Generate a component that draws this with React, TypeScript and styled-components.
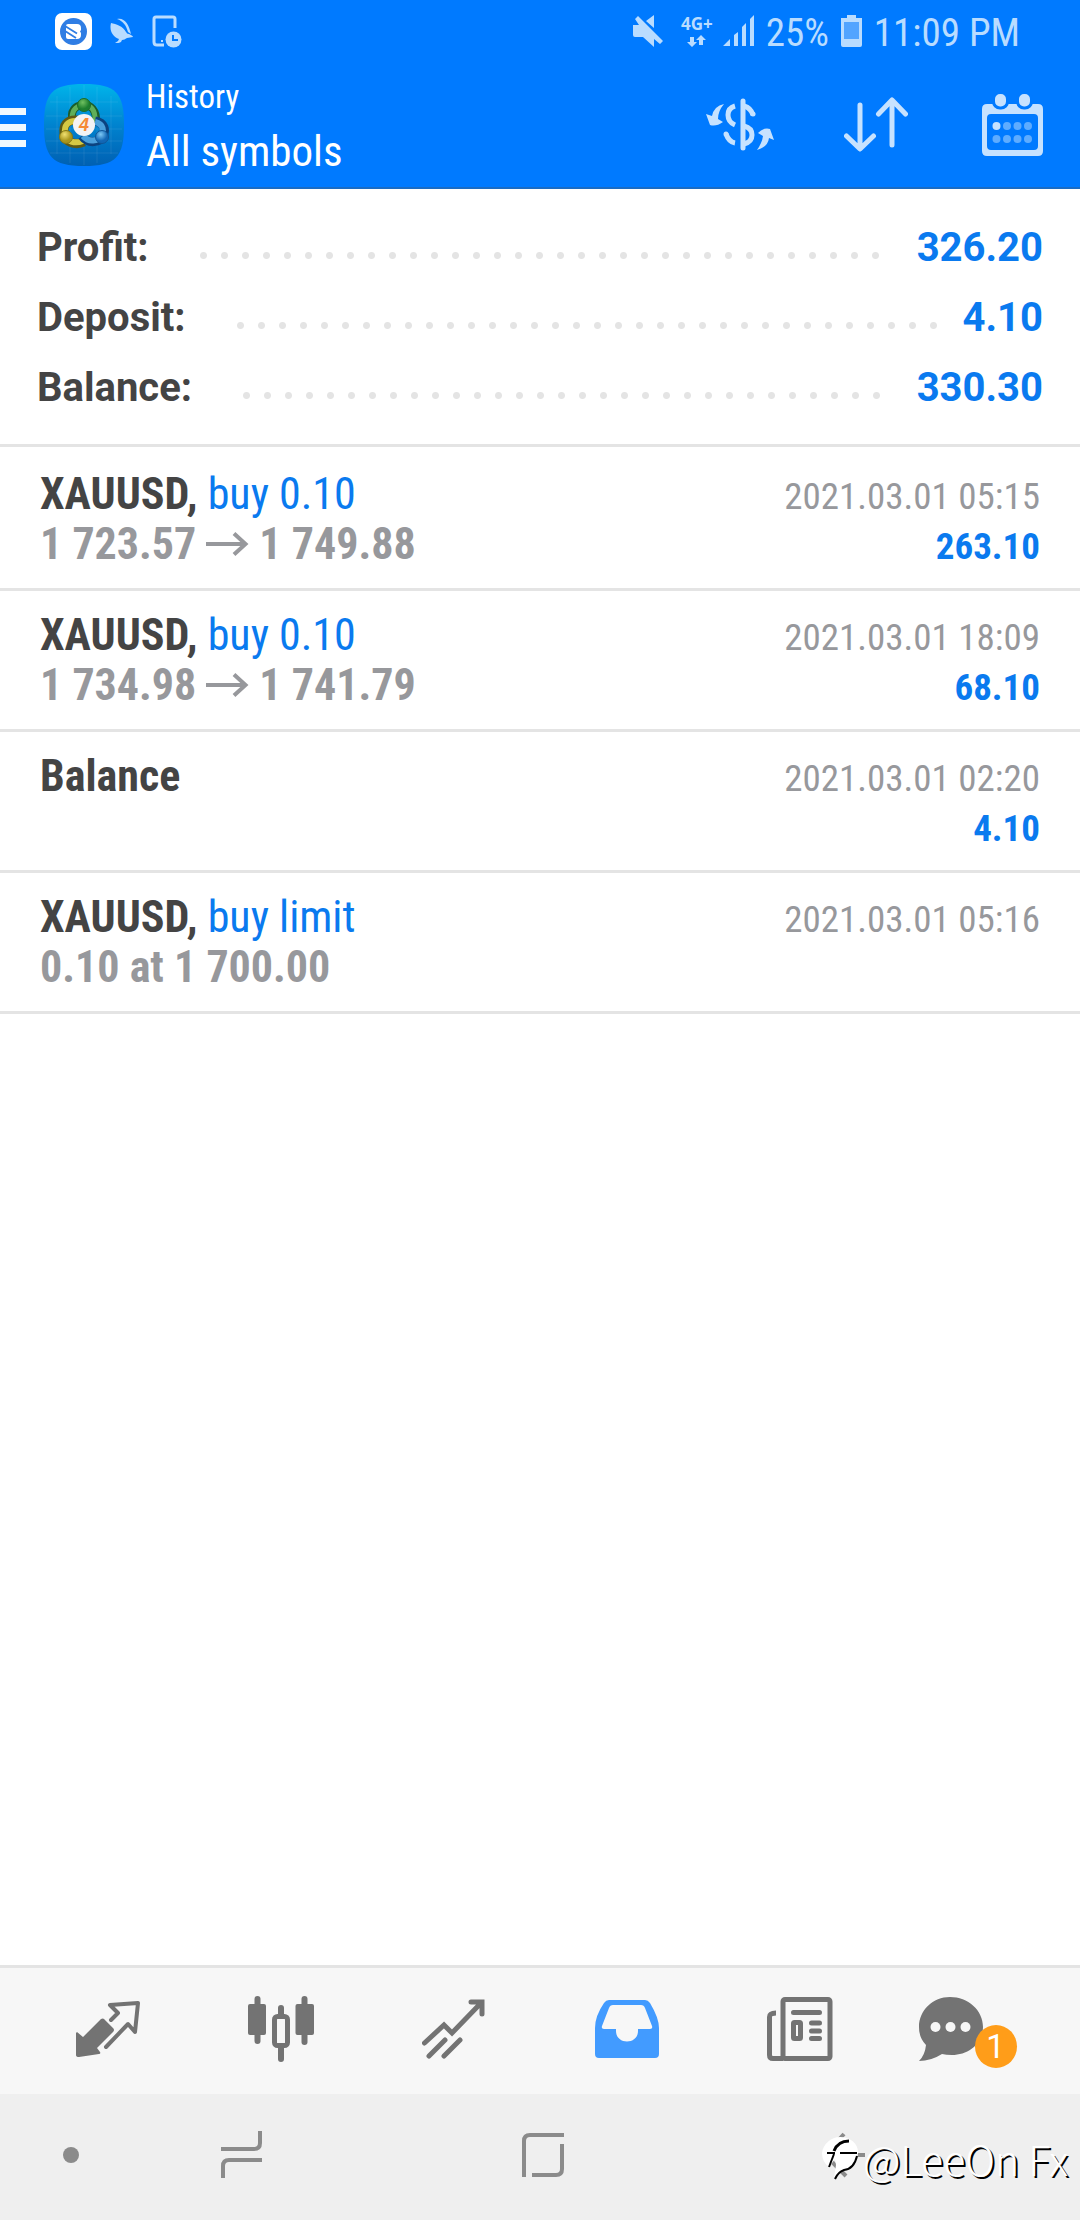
import React from "react";
import styled, { createGlobalStyle } from "styled-components";

const condensed = '"Roboto Condensed", "Liberation Sans Narrow", Roboto, sans-serif';
const blue = "#0a7aef";
const line = "#e4e4e4";

const GlobalStyle = createGlobalStyle`
  *, *::before, *::after { box-sizing: border-box; }
  body { margin: 0; background: #fff; }
  button { margin: 0; padding: 0; border: 0; background: none; color: inherit; font: inherit; cursor: pointer; }
  svg { display: block; flex: none; }
  ul, dl, dd, p, h1 { margin: 0; padding: 0; }
  ul { list-style: none; }
`;

const Screen = styled.div`
  display: flex;
  flex-direction: column;
  min-height: 100vh;
  font-family: ${condensed};
  color: #444;
`;

const Header = styled.header`
  background: #007aff;
  border-bottom: 2px solid #1a6cc4;
`;

const StatusBar = styled.div`
  display: flex;
  align-items: center;
  justify-content: space-between;
  height: 62px;
  padding: 0 60px 0 55px;
  color: #b9dcff;
`;

const StatusGroup = styled.div<{ $gap: number }>`
  display: flex;
  align-items: center;
  gap: ${(p) => p.$gap}px;
`;

const StatusText = styled.span`
  padding-top: 3px;
  font-size: 39px;
  line-height: 46px;
`;

const Network = styled.div`
  display: flex;
  flex-direction: column;
  align-items: center;
  gap: 2px;
  margin-left: 8px;
  font: 700 17px/18px "Noto Sans", sans-serif;
`;

const Toolbar = styled.div`
  display: flex;
  align-items: center;
  height: 125px;
  color: #fff;
`;

const MenuButton = styled.button`
  display: flex;
  align-items: center;
  gap: 18px;
`;

const Titles = styled.div`
  flex: 1;
  margin-left: 22px;
  padding-top: 5px;
`;

const Section = styled.p`
  font-size: 33px;
  line-height: 48px;
`;

const Title = styled.h1`
  font-size: 43px;
  font-weight: 400;
  line-height: 60px;
`;

const ToolButton = styled.button`
  display: flex;
  align-items: center;
  justify-content: center;
  width: 136px;
  height: 125px;
  color: #c6e2ff;
`;

const Summary = styled.dl`
  padding: 24px 37px 21px 37px;
  border-bottom: 3px solid ${line};
  font: 700 40px/70px Roboto, sans-serif;
`;

const SummaryRow = styled.div`
  display: flex;
  align-items: center;
`;

const Leader = styled.span`
  flex: 1;
  height: 7px;
  margin: 14px 16px 0 44px;

  &::before {
    content: "";
    display: block;
    width: round(down, 100%, 21px);
    height: 7px;
    background: radial-gradient(circle at center, ${line} 3px, transparent 4px) left center / 21px 7px repeat-x;
  }
`;

const SummaryValue = styled.dd`
  color: ${blue};
`;

const Deals = styled.ul`
  flex: 1;
  padding-top: 3px;
`;

const Deal = styled.li`
  display: flex;
  justify-content: space-between;
  height: 141px;
  padding: 19px 40px 0 40px;
  border-bottom: 3px solid ${line};
  line-height: 50px;
`;

const Name = styled.p`
  font-size: 44px;
  font-weight: 700;
`;

const Side = styled.span`
  color: ${blue};
  font-weight: 400;
`;

const Prices = styled.p`
  display: flex;
  align-items: center;
  gap: 10px;
  color: #97989c;
  font-size: 44px;
  font-weight: 700;
`;

const Meta = styled.div`
  padding-top: 3px;
  text-align: right;
  font-size: 37px;
`;

const Time = styled.p`
  color: #97989c;
`;

const Result = styled.p`
  color: ${blue};
  font-weight: 700;
`;

const TabBar = styled.nav`
  display: flex;
  height: 129px;
  padding: 0 21px 5px;
  border-top: 3px solid ${line};
  background: #f7f7f7;
`;

const Tab = styled.button<{ $active?: boolean }>`
  display: flex;
  flex: 1;
  align-items: center;
  justify-content: center;
  color: ${(p) => (p.$active ? "#429bff" : "#737373")};
`;

const ChatIcon = styled.span`
  position: relative;
  width: 108px;
`;

const Badge = styled.span`
  position: absolute;
  left: 56px;
  top: 28px;
  width: 42px;
  height: 43px;
  border-radius: 50%;
  background: #ff9d19;
  color: #fff;
  font: 400 33px/44px Roboto, sans-serif;
  text-align: center;
`;

const SystemBar = styled.div`
  position: relative;
  display: flex;
  height: 126px;
  padding: 0 85px 5px 51px;
  background: #efefef;
  color: #8b8b8b;
`;

const SystemButton = styled.button<{ $small?: boolean }>`
  display: flex;
  flex: ${(p) => (p.$small ? "0 0 40px" : "1")};
  align-items: center;
  justify-content: center;
`;

const Watermark = styled.div`
  position: absolute;
  right: 12px;
  bottom: 32px;
  display: flex;
  align-items: center;
  gap: 4px;
  color: #fff;
  font: 300 41px/60px "Noto Sans CJK SC", sans-serif;
  text-shadow: 2px 2px 0 #000;
`;

const BrowserIcon = () => (
  <svg width="37" height="37" viewBox="0 0 37 37">
    <rect width="37" height="37" rx="7" fill="#fff" />
    <circle cx="18.500" cy="18.500" r="13.500" fill="#2f7de4" />
    <path d="M13 11h9q4 0 4 4v2l-1 1.500 1 1.500v2q0 4-4 4H13q-2 0-2-2V13q0-2 2-2z" fill="#fff" />
    <path d="M10 13l12 7.500M10 18l11 7" stroke="#2f7de4" strokeWidth="1.800" />
  </svg>
);

const BirdIcon = () => (
  <svg width="24" height="26" viewBox="0 0 24 26" fill="currentColor">
    <path d="M1 5c5 1 12 3 15 9 1 1 1 2 3 2 2 1 4 2 4 3l-6 1c-2 1-3 2-5 2l-1 2c-1 1-4 1-6 1l3-2 1-2C3 19-1 13 1 5z" />
    <path d="M7 1c7-2 12 5 14 15l-3-2C16 7 13 3 7 1z" />
  </svg>
);

const TabletIcon = () => (
  <svg width="31" height="33" viewBox="0 0 31 33" fill="none" stroke="currentColor">
    <path d="M23 13V4q0-2-2-2H4Q2 2 2 4v23q0 3 3 3h7" strokeWidth="3" />
    <rect x="9" y="25" width="2" height="2" fill="currentColor" stroke="none" />
    <circle cx="21.500" cy="24.500" r="8" fill="currentColor" stroke="none" />
    <path d="M21 20v5h5" stroke="#007aff" strokeWidth="2" />
  </svg>
);

const MuteIcon = () => (
  <svg width="30" height="32" viewBox="0 0 30 32" fill="currentColor">
    <path d="M21 0v13l-8-7zM0 10h6L2 4l3-3 25 25-3 3-6-5v8L10 22H2q-2 0-2-2z" />
  </svg>
);

const DataArrows = () => (
  <svg width="19" height="12" viewBox="0 0 19 12" fill="currentColor">
    <path d="M3 2h4v5h3l-5 5-5-5h3zM12 10h4V5h3l-5-5-5 5h3z" />
  </svg>
);

const SignalIcon = () => (
  <svg width="31" height="32" viewBox="0 0 31 32" fill="currentColor">
    <path d="M0 31l7-7v7zM11 20l4-3v14h-4zM19 12l4-4v23h-4zM27 4l4-4v31h-4z" />
  </svg>
);

const BatteryIcon = () => (
  <svg width="21" height="32" viewBox="0 0 21 32" fill="currentColor">
    <path d="M6 0h9v3h6v27q0 2-2 2H2q-2 0-2-2V3h6z" />
    <rect x="3" y="7" width="15" height="17" fill="#52a4ff" />
  </svg>
);

const MenuIcon = () => (
  <svg width="26" height="45" viewBox="0 0 26 45" fill="#f0f8ff">
    <path d="M0 6h26v7H0zM0 22h26v7H0zM0 38h26v7H0z" />
  </svg>
);

const AppLogo = () => (
  <svg width="80" height="82" viewBox="0 0 80 82">
    <defs>
      <linearGradient id="tile" x2="0" y2="1">
        <stop stopColor="#00b4ea" />
        <stop offset=".5" stopColor="#0083cf" />
        <stop offset="1" stopColor="#0060b2" />
      </linearGradient>
      <radialGradient id="green" cx=".4" cy=".3"><stop stopColor="#6fc060" /><stop offset="1" stopColor="#1d7f2e" /></radialGradient>
      <radialGradient id="gold" cx=".4" cy=".3"><stop stopColor="#f0e070" /><stop offset="1" stopColor="#a8951c" /></radialGradient>
      <radialGradient id="azure" cx=".4" cy=".3"><stop stopColor="#7cc8f5" /><stop offset="1" stopColor="#1267b5" /></radialGradient>
    </defs>
    <path d="M40 0C72 0 80 9 80 41S72 82 40 82 0 73 0 41 8 0 40 0z" fill="url(#tile)" />
    <path d="M13 12v58M26 3v76M40 1v80M53 3v76M67 12v58M6 18h68M2 32h76M2 45h76M2 57h76M6 69h68" stroke="#fff" strokeOpacity=".08" />
    <g fill="none">
      <path d="M28 34C27 24 34 21 40 21s13 4 12 18" stroke="#1b5c2a" strokeWidth="8" />
      <path d="M28 34C28 25 34 21 40 21s12 4 11 17" stroke="#5fae58" strokeWidth="5" />
      <path d="M34 36C22 35 19 42 20 50s11 12 20 8" stroke="#5f5a14" strokeWidth="9" />
      <path d="M34 37C23 36 20 42 21 50s10 10 18 7" stroke="#d5c944" strokeWidth="6" />
      <path d="M51 37c10 2 11 9 8 15s-14 9-21 0" stroke="#0c4380" strokeWidth="9" />
      <path d="M51 38c9 2 9 9 6 14s-12 7-18 0" stroke="#4ba0dc" strokeWidth="6" />
    </g>
    <circle cx="40" cy="21" r="6.500" fill="url(#green)" stroke="#1b6b2a" />
    <circle cx="22" cy="53" r="6.500" fill="url(#gold)" stroke="#827616" />
    <circle cx="58" cy="53" r="6.500" fill="url(#azure)" stroke="#0f5698" />
    <circle cx="40" cy="41" r="11" fill="#f4f3f4" />
    <text x="40" y="47" textAnchor="middle" fontFamily="Liberation Sans, sans-serif" fontSize="18" fontWeight="700" fontStyle="italic" fill="#f58a35">4</text>
  </svg>
);

const CurrencyIcon = () => (
  <svg width="68" height="54" viewBox="0 0 68 54" fill="none" stroke="currentColor">
    <path d="M37 3v47" strokeWidth="5" strokeLinecap="round" />
    <path d="M29 8q-7 2-7 9t7 10M38 8q7 2 9 9M38 28q8 2 8 9t-8 9M29 45q-6-1-9-9" strokeWidth="5" />
    <circle cx="47" cy="16" r="2.500" fill="currentColor" stroke="none" />
    <circle cx="20" cy="36" r="2.500" fill="currentColor" stroke="none" />
    <path d="M18 6Q8 8 6 18l-6-2 4 11q6 2 13-3l-5-3q0-8 6-15zM51 52q11-3 12-12l5 2-4-11q-6-2-12 4l5 3q-1 7-6 14z" fill="currentColor" stroke="none" />
  </svg>
);

const SortIcon = () => (
  <svg width="64" height="56" viewBox="0 0 64 56" fill="none" stroke="currentColor" strokeWidth="5" strokeLinecap="round" strokeLinejoin="round">
    <path d="M16 8v43M2.500 39L16 52l13.500-13M48 48V4M34.500 17L48 3l13.500 14" />
  </svg>
);

const CalendarIcon = () => (
  <svg width="61" height="64" viewBox="0 0 61 64">
    <path fillRule="evenodd" d="M5 11h51q5 0 5 5v42q0 5-5 5H5q-5 0-5-5V16q0-5 5-5zM9 21q-4 0-4 4v28q0 4 4 4h43q4 0 4-4V25q0-4-4-4z" fill="currentColor" />
    <g fill="currentColor" stroke="#007aff" strokeWidth="3">
      <rect x="11.500" y="-.500" width="14" height="15.500" rx="6.500" />
      <rect x="35.500" y="-.500" width="14" height="15.500" rx="6.500" />
    </g>
    <circle cx="14.500" cy="33" r="4" fill="#c6e2ff" />
    <g fill="#5eacff">
      {[25, 35.5, 46].map((x) => <circle key={x} cx={x} cy="33" r="4" />)}
      {[14.5, 25, 35.5, 46].map((x) => <circle key={x} cx={x} cy="46" r="4" />)}
    </g>
  </svg>
);

const ArrowGlyph = () => (
  <svg width="43" height="24" viewBox="0 0 43 24" fill="none" stroke="currentColor" strokeWidth="4" role="img" aria-label="to">
    <path d="M0 12h39M28 1.500L39.500 12 28 22.500" />
  </svg>
);

const QuotesIcon = () => (
  <svg width="64" height="58" viewBox="0 0 64 58">
    <path d="M1 32l6 5 18-18q2-1 3 0l9 9q2 2 0 4L21 48l3 4q1 2-1 2L3 57q-3 0-3-2V33z" fill="currentColor" />
    <path d="M35 20l7-7-8-8 28-2-3 29-7-8-22 23" fill="none" stroke="currentColor" strokeWidth="4" strokeLinejoin="round" strokeLinecap="round" />
  </svg>
);

const CandlesIcon = () => (
  <svg width="66" height="66" viewBox="0 0 66 66" fill="currentColor">
    <rect x="6.500" width="6" height="48" rx="3" />
    <rect x="53.500" width="6" height="49" rx="3" />
    <rect x="30" y="9" width="6" height="57" rx="3" />
    <rect y="8" width="18" height="31" rx="2" />
    <rect x="47.500" y="8" width="18.500" height="31" rx="2" />
    <rect x="26.500" y="20.500" width="13" height="29" rx="3" fill="#f7f7f7" stroke="currentColor" strokeWidth="5" />
  </svg>
);

const TrendIcon = () => (
  <svg width="63" height="60" viewBox="0 0 63 60" fill="none" stroke="currentColor" strokeWidth="5" strokeLinecap="round">
    <path d="M2.500 44L22 26l8 8L58 5M49 3h11v12M7 57l16-16M22 57l16-16" />
  </svg>
);

const InboxIcon = () => (
  <svg width="64" height="58" viewBox="0 0 64 58">
    <path fillRule="evenodd" fill="currentColor" d="M14 0h36q3 0 5 3 9 15 9 25v26q0 4-4 4H4q-4 0-4-4V28Q0 16 9 3q2-3 5-3zM18 5q-3 0-4 3L7 26q-1 3 2 3h12v2c0 14 22 14 22 0v-2h12q3 0 2-3L50 8q-1-3-4-3z" />
  </svg>
);

const NewsIcon = () => (
  <svg width="66" height="64" viewBox="0 0 66 64" fill="none" stroke="currentColor" strokeWidth="5" strokeLinecap="round">
    <rect x="16" y="2.500" width="47" height="59" rx="2" />
    <path d="M16 61.500H6q-3.500 0-3.500-3.500V20q0-4 6.500-4" strokeLinecap="butt" />
    <path d="M26.500 15.500h26M44.500 26h8M44.500 34h8M44.500 41.500h8" />
    <rect x="26.500" y="25.500" width="7" height="16" rx="1" />
  </svg>
);

const BubbleIcon = () => (
  <svg width="64" height="64" viewBox="0 0 64 64">
    <path d="M31 0c18 0 33 13 33 30S49 58 33 58q-6 0-10-1-11 7-23 7 6-6 7-16Q0 41 0 30C0 13 14 0 31 0z" fill="currentColor" />
    <g fill="#f7f7f7"><circle cx="16.500" cy="30" r="5" /><circle cx="31.500" cy="30" r="5" /><circle cx="46.500" cy="30" r="5" /></g>
  </svg>
);

const DotIcon = () => (
  <svg width="16" height="16" viewBox="0 0 16 16"><circle cx="8" cy="8" r="8" fill="currentColor" /></svg>
);

const RecentsIcon = () => (
  <svg width="41" height="47" viewBox="0 0 41 47" fill="none" stroke="currentColor" strokeWidth="4">
    <path d="M0 18h33q6 0 6-6V0M41 29H8q-6 0-6 6v12" />
  </svg>
);

const HomeIcon = () => (
  <svg width="42" height="44" viewBox="0 0 42 44" fill="none" stroke="currentColor" strokeWidth="4">
    <path d="M2 44V8q0-6 6-6h34M40 11v25q0 6-6 6H10" />
  </svg>
);

const BackIcon = () => (
  <svg width="42" height="46" viewBox="0 0 42 46" fill="none" stroke="currentColor" strokeWidth="4">
    <path d="M21 2L2 23l21 21M3 23h39" />
  </svg>
);

const MarkIcon = () => (
  <svg width="37" height="44" viewBox="0 0 37 44" fill="none">
    <path d="M0 17C1 8 9 1 18 1c11 0 18 7 18 15 0 10-6 16-13 18-5 1-8 4-11 8l2-13-1-6-6 8Q0 26 0 17z" fill="#fff" />
    <path d="M5 17h8M18 17h17" stroke="#000" strokeWidth="2" />
    <path d="M12 15Q16 5 27 5" stroke="#000" strokeWidth="3" />
    <path d="M12 18L7 31" stroke="#000" strokeWidth="2" />
    <path d="M35 20q-3 13-13 14-6 2-9 9" stroke="#000" strokeWidth="2" />
  </svg>
);

const summary = [
  { label: "Profit:", value: "326.20" },
  { label: "Deposit:", value: "4.10" },
  { label: "Balance:", value: "330.30" },
];

type DealData = {
  name: string;
  side?: string;
  open?: string;
  close?: string;
  time: string;
  result?: string;
};

const deals: DealData[] = [
  { name: "XAUUSD,", side: "buy 0.10", open: "1 723.57", close: "1 749.88", time: "2021.03.01 05:15", result: "263.10" },
  { name: "XAUUSD,", side: "buy 0.10", open: "1 734.98", close: "1 741.79", time: "2021.03.01 18:09", result: "68.10" },
  { name: "Balance", time: "2021.03.01 02:20", result: "4.10" },
  { name: "XAUUSD,", side: "buy limit", open: "0.10 at 1 700.00", time: "2021.03.01 05:16" },
];

export default function App() {
  return (
    <Screen>
      <GlobalStyle />
      <Header>
        <StatusBar>
          <StatusGroup $gap={18}>
            <BrowserIcon />
            <BirdIcon />
            <TabletIcon />
          </StatusGroup>
          <StatusGroup $gap={12}>
            <StatusGroup $gap={10}>
              <MuteIcon />
              <Network>
                <span>4G+</span>
                <DataArrows />
              </Network>
              <SignalIcon />
            </StatusGroup>
            <StatusText>25%</StatusText>
            <BatteryIcon />
            <StatusText>11:09 PM</StatusText>
          </StatusGroup>
        </StatusBar>
        <Toolbar>
          <MenuButton aria-label="Open menu">
            <MenuIcon />
            <AppLogo />
          </MenuButton>
          <Titles>
            <Section>History</Section>
            <Title>All symbols</Title>
          </Titles>
          <ToolButton aria-label="Currency"><CurrencyIcon /></ToolButton>
          <ToolButton aria-label="Sort"><SortIcon /></ToolButton>
          <ToolButton aria-label="Period"><CalendarIcon /></ToolButton>
        </Toolbar>
      </Header>

      <Summary>
        {summary.map((row) => (
          <SummaryRow key={row.label}>
            <dt>{row.label}</dt>
            <Leader />
            <SummaryValue>{row.value}</SummaryValue>
          </SummaryRow>
        ))}
      </Summary>

      <Deals>
        {deals.map((deal) => (
          <Deal key={deal.name + deal.time}>
            <div>
              <Name>
                {deal.name} {deal.side && <Side>{deal.side}</Side>}
              </Name>
              {deal.open && (
                <Prices>
                  <span>{deal.open}</span>
                  {deal.close && <ArrowGlyph />}
                  {deal.close && <span>{deal.close}</span>}
                </Prices>
              )}
            </div>
            <Meta>
              <Time>{deal.time}</Time>
              {deal.result && <Result>{deal.result}</Result>}
            </Meta>
          </Deal>
        ))}
      </Deals>

      <TabBar>
        <Tab aria-label="Quotes"><QuotesIcon /></Tab>
        <Tab aria-label="Charts"><CandlesIcon /></Tab>
        <Tab aria-label="Trade"><TrendIcon /></Tab>
        <Tab aria-label="History" $active><InboxIcon /></Tab>
        <Tab aria-label="News"><NewsIcon /></Tab>
        <Tab aria-label="Messages">
          <ChatIcon>
            <BubbleIcon />
            <Badge>1</Badge>
          </ChatIcon>
        </Tab>
      </TabBar>
      <SystemBar>
        <SystemButton $small aria-label="Toggle bar"><DotIcon /></SystemButton>
        <SystemButton aria-label="Recents"><RecentsIcon /></SystemButton>
        <SystemButton aria-label="Home"><HomeIcon /></SystemButton>
        <SystemButton aria-label="Back"><BackIcon /></SystemButton>
        <Watermark>
          <MarkIcon />
          <span>@LeeOn Fx</span>
        </Watermark>
      </SystemBar>
    </Screen>
  );
}
